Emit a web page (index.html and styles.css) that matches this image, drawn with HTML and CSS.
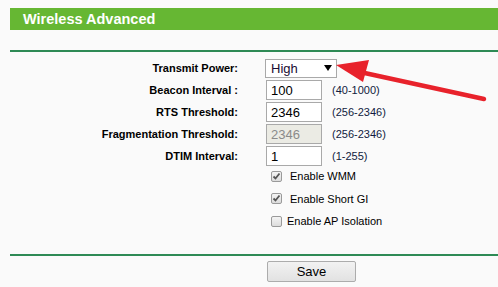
FILE: index.html
```html
<!DOCTYPE html>
<html>
<head>
<meta charset="utf-8">
<link rel="stylesheet" href="styles.css">
</head>
<body>
<div class="page">
  <div class="title">Wireless Advanced</div>
  <div class="rule top"></div>
  <div class="form">
    <label class="lbl">Transmit Power:</label>
    <div class="field">
      <div class="select"><span>High</span><svg class="caret" width="8" height="6" viewBox="0 0 8 6"><path d="M0 0H8L4 6Z" fill="#000"/></svg></div>
    </div>
    <label class="lbl">Beacon Interval :</label>
    <div class="field"><input class="txt" type="text" value="100"><span class="hint">(40-1000)</span></div>
    <label class="lbl">RTS Threshold:</label>
    <div class="field"><input class="txt" type="text" value="2346"><span class="hint">(256-2346)</span></div>
    <label class="lbl">Fragmentation Threshold:</label>
    <div class="field"><input class="txt dis" type="text" value="2346" disabled><span class="hint">(256-2346)</span></div>
    <label class="lbl">DTIM Interval:</label>
    <div class="field"><input class="txt" type="text" value="1"><span class="hint">(1-255)</span></div>
  </div>
  <div class="checks">
    <div class="chk"><span class="box"><svg width="9" height="9" viewBox="0 0 9 9"><path d="M1.5 4.5L3.5 6.5L7.5 1.5" fill="none" stroke="#555" stroke-width="1.8"/></svg></span><span class="ct">Enable WMM</span></div>
    <div class="chk"><span class="box"><svg width="9" height="9" viewBox="0 0 9 9"><path d="M1.5 4.5L3.5 6.5L7.5 1.5" fill="none" stroke="#555" stroke-width="1.8"/></svg></span><span class="ct">Enable Short GI</span></div>
    <div class="chk"><span class="box"></span><span class="ct short">Enable AP Isolation</span></div>
  </div>
  <div class="rule bottom"></div>
  <div class="actions"><button class="btn" type="button">Save</button></div>
  <svg class="annot" width="160" height="50" viewBox="0 0 160 50">
    <path d="M148 39L24 12" stroke="#e8222b" stroke-width="4.5" stroke-linecap="round" fill="none"/>
    <path d="M0 5L33 0L27 22Z" fill="#e8222b"/>
  </svg>
</div>
</body>
</html>
```
FILE: styles.css
```css
html, body {
  margin: 0;
  padding: 0;
  background: #fafafa;
}
.page {
  position: relative;
  width: 498px;
  height: 287px;
  overflow: hidden;
  font-family: "Liberation Sans", Arial, sans-serif;
  color: #000;
}
.title {
  margin: 8px 0 0 10px;
  height: 22px;
  line-height: 22px;
  background: #66b733;
  color: #fff;
  font-weight: bold;
  font-size: 14.5px;
  padding-left: 13px;
}
.rule {
  margin-left: 10px;
  height: 2px;
  background: #2e8a55;
}
.rule.top {
  margin-top: 20px;
}
.form {
  display: grid;
  grid-template-columns: 238px auto;
  column-gap: 27px;
  grid-auto-rows: 22px;
  align-items: center;
  margin-top: 5px;
}
.lbl {
  text-align: right;
  font-weight: bold;
  font-size: 11px;
}
.field {
  display: flex;
  align-items: center;
}
.select {
  width: 72px;
  height: 19px;
  border: 1px solid #a9a9a9;
  background: #fff;
  display: flex;
  align-items: center;
  justify-content: space-between;
  padding: 0 4px 0 5px;
  box-sizing: border-box;
  font-size: 13px;
  color: #1a0c33;
}
.caret {
  display: block;
}
.txt {
  width: 56px;
  height: 20px;
  box-sizing: border-box;
  border: 1px solid #a9a9a9;
  background: #fff;
  font-family: "Liberation Sans", Arial, sans-serif;
  font-size: 13px;
  padding: 0 4px;
  margin: 0 0 0 1px;
  color: #000;
  outline: none;
}
.txt.dis {
  background: #ebebe4;
  color: #8a8a8a;
}
.hint {
  margin-left: 10px;
  font-size: 11px;
  color: #111a40;
}
.checks {
  display: flex;
  flex-direction: column;
  margin-left: 271px;
  margin-top: -2px;
}
.chk {
  display: flex;
  align-items: center;
  height: 22.5px;
}
.box {
  width: 9px;
  height: 9px;
  border: 1px solid #9a9a9a;
  border-radius: 2px;
  background: linear-gradient(#f4f4f4, #dcdcdc);
  display: flex;
  align-items: center;
  justify-content: center;
}
.box svg {
  display: block;
}
.ct {
  margin-left: 8px;
  font-size: 11px;
}
.ct.short {
  margin-left: 5px;
}
.rule.bottom {
  margin-top: 21px;
}
.actions {
  padding-left: 267px;
  margin-top: 5px;
}
.btn {
  width: 89px;
  height: 21px;
  border: 1px solid #acacac;
  border-radius: 2px;
  background: linear-gradient(#f2f2f2, #e2e2e2);
  font-family: "Liberation Sans", Arial, sans-serif;
  font-size: 13px;
  color: #000;
  padding: 0;
}
.annot {
  position: absolute;
  left: 336px;
  top: 60px;
}
```
